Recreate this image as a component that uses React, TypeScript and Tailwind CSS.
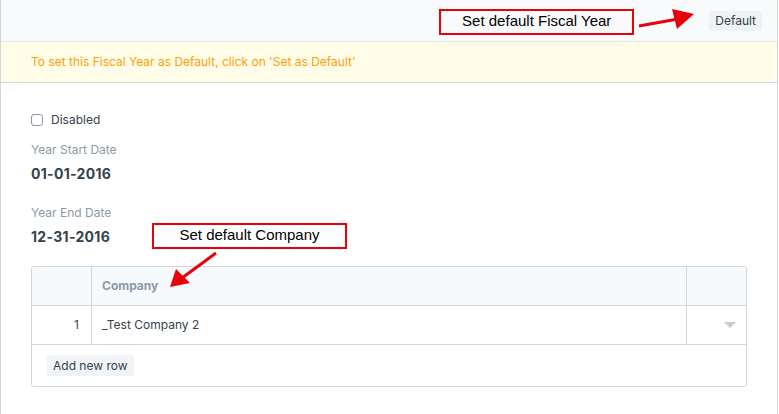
export default function App() {
  return (
    <div
      className="w-[779px] h-[414px] bg-white overflow-hidden"
      style={{ fontFamily: "Inter, 'Noto Sans', sans-serif" }}
    >
      <div className="w-[778px] h-full border-x border-[#d1d8dd] flex flex-col">
        {/* header */}
        <div className="h-[42px] bg-[#f8fafc] border-b border-[#e2e6e9] flex items-center pr-[15px] shrink-0">
          <div className="flex-1" />
          <div className="w-[195px] h-[26px] mt-[2px] border-2 border-[#e8000b] flex items-center justify-center text-[15px] text-black font-['Liberation_Sans',Arial,sans-serif]">
            Set default Fiscal Year
          </div>
          <svg width="66" height="30" viewBox="0 0 66 30">
            <line x1="5" y1="20" x2="44" y2="13" stroke="#e8000b" strokeWidth="3" />
            <polygon points="60,8 38,3 43,23" fill="#e8000b" />
          </svg>
          <div className="ml-[9px] h-[20px] px-[6px] rounded-[3px] bg-[#eef2f5] text-[12px] text-[#36414c] flex items-center">
            Default
          </div>
        </div>

        {/* banner */}
        <div className="h-[41px] bg-[#fffce7] border-b border-[#d1d8dd] flex items-center pl-[30px] text-[12px] text-[#ffa00a] shrink-0">
          To set this Fiscal Year as Default, click on &#39;Set as Default&#39;
        </div>

        {/* form */}
        <div className="px-[30px] pt-[30px]">
          <label className="flex items-center gap-[8px] text-[12px] text-[#36414c] h-[14px]">
            <span className="w-[12px] h-[12px] border border-[#8d99a6] rounded-[3px] bg-white" />
            Disabled
          </label>

          <div className="mt-[14px] text-[12px] text-[#8d99a6]">Year Start Date</div>
          <div className="mt-[4px] text-[14px] font-bold text-[#36414c] tracking-[0.3px]">01-01-2016</div>

          <div className="mt-[20px] text-[12px] text-[#8d99a6]">Year End Date</div>
          <div className="flex items-center h-[24px] mt-[2px]">
            <div className="w-[121px] text-[14px] font-bold text-[#36414c] tracking-[0.3px]">12-31-2016</div>
            <div className="relative w-[195px] h-[26px] mt-[-1px] border-2 border-[#e8000b] flex items-center justify-center text-[15px] text-black font-['Liberation_Sans',Arial,sans-serif]">
              Set default Company
              <svg width="60" height="45" viewBox="0 0 60 45" className="absolute left-[10px] top-[26px] overflow-visible">
                <line x1="52" y1="2" x2="18" y2="27" stroke="#e8000b" strokeWidth="3" />
                <polygon points="6,36 12,18 26,32" fill="#e8000b" />
              </svg>
            </div>
          </div>

          {/* table */}
          <div className="mt-[18px] w-[716px] border border-[#d1d8dd] rounded-[3px] text-[12px]">
            <div className="flex h-[39px] bg-[#f7fafc] border-b border-[#d1d8dd] rounded-t-[3px]">
              <div className="w-[60px] border-r border-[#d1d8dd]" />
              <div className="flex-1 border-r border-[#d1d8dd] flex items-center pl-[10px] font-bold text-[#8d99a6]">
                Company
              </div>
              <div className="w-[59px]" />
            </div>
            <div className="flex h-[39px] border-b border-[#d1d8dd]">
              <div className="w-[60px] border-r border-[#d1d8dd] flex items-center justify-end pr-[12px] text-[#36414c]">
                1
              </div>
              <div className="flex-1 border-r border-[#d1d8dd] flex items-center pl-[10px] text-[#36414c]">
                _Test Company 2
              </div>
              <div className="w-[59px] flex items-center justify-end pr-[10px]">
                <svg width="12" height="6" viewBox="0 0 12 6">
                  <polygon points="0,0 12,0 6,6" fill="#c8cdd1" />
                </svg>
              </div>
            </div>
            <div className="h-[41px] flex items-center pl-[15px]">
              <div className="h-[21px] px-[6px] rounded-[3px] bg-[#f0f4f7] text-[#36414c] flex items-center">
                Add new row
              </div>
            </div>
          </div>
        </div>
      </div>
    </div>
  );
}
